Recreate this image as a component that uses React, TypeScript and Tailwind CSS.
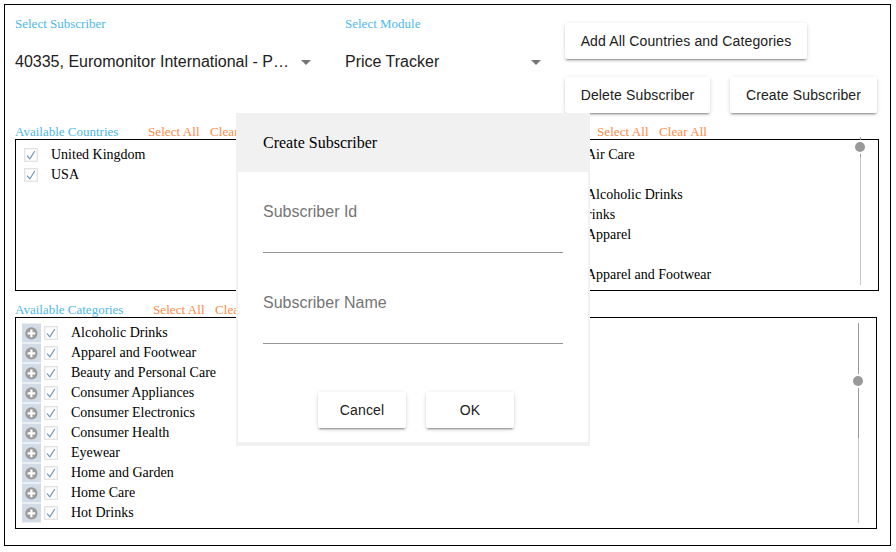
import React from "react";

const serif = "font-['Liberation_Serif','Times_New_Roman',serif]";
const sans = "font-['Liberation_Sans',Arial,sans-serif]";

const categories = [
  "Alcoholic Drinks",
  "Apparel and Footwear",
  "Beauty and Personal Care",
  "Consumer Appliances",
  "Consumer Electronics",
  "Consumer Health",
  "Eyewear",
  "Home and Garden",
  "Home Care",
  "Hot Drinks",
];

function Check() {
  return (
    <span className="flex size-[14px] shrink-0 items-center justify-center border border-[#e3e3e3] bg-white shadow-[inset_0_0_0_1px_#f4f4f4]">
      <svg width="12" height="12" viewBox="0 0 12 12" fill="none" stroke="#6491b9" strokeWidth="1.1">
        <path d="M2 6.6 L4.9 9.8 L9.8 2" />
      </svg>
    </span>
  );
}

function Plus() {
  return (
    <span className="flex h-[20px] w-[19px] shrink-0 items-start border-b border-[#e9eff5] bg-[#d2dce7] pl-[3px] pt-1 shadow-[inset_0_1px_0_#e9eff5]">
      <svg className="shrink-0" width="13" height="13" viewBox="0 0 13 13">
        <circle cx="6.4" cy="6.4" r="6.1" fill="#9b9b9b" />
        <path d="M6.4 2.6V10.2M2.6 6.4H10.2" stroke="#fff" strokeWidth="2.2" />
      </svg>
    </span>
  );
}

function Button({ className = "", children }: { className?: string; children: React.ReactNode }) {
  return (
    <button
      className={`h-9 shrink-0 whitespace-nowrap rounded-[2px] bg-white text-center text-[14px] leading-9 tracking-[0.14px] text-[#212121] shadow-[0_3px_1px_-2px_rgba(0,0,0,0.2),0_2px_2px_0_rgba(0,0,0,0.14),0_1px_5px_0_rgba(0,0,0,0.12)] ${sans} ${className}`}
    >
      {children}
    </button>
  );
}

function Select({ label, value, className }: { label: string; value: string; className: string }) {
  return (
    <div className={className}>
      <div className="text-[13px] leading-4 text-[#4db8ec]">{label}</div>
      <div className={`mt-5 flex items-center justify-between text-[16px] leading-5 text-[#212121] ${sans}`}>
        <span className="whitespace-nowrap">{value}</span>
        <svg className="mr-px" width="10" height="5" viewBox="0 0 10 5">
          <path d="M0 0H10L5 5Z" fill="#757575" />
        </svg>
      </div>
    </div>
  );
}

function Actions() {
  return (
    <div className="flex whitespace-nowrap tracking-[0.08px] text-[#ff8a45]">
      <span className="w-[62px]">Select All</span>
      <span className="w-[49px]">Clear All</span>
    </div>
  );
}

export default function App() {
  return (
    <div className={`h-[552px] w-[896px] overflow-hidden bg-white p-1 text-black ${serif}`}>
      <div className="h-[542px] w-[887px] border border-black pl-[10px]">
        <div className="flex h-[119px]">
          <Select className="w-[297px] pt-[11px]" label="Select Subscriber" value="40335, Euromonitor International - P…" />
          <Select className="ml-[33px] w-[197px] pt-[11px]" label="Select Module" value="Price Tracker" />
          <div className="ml-[23px] pt-[18px]">
            <Button className="w-[242px]">Add All Countries and Categories</Button>
            <div className="mt-[18px] flex gap-5">
              <Button className="w-[145px]">Delete Subscriber</Button>
              <Button className="w-[147px]">Create Subscriber</Button>
            </div>
          </div>
        </div>

        <div className="flex h-[15px] text-[13px] leading-[16px]">
          <span className="w-[133px] text-[#4db8ec]">Available Countries</span>
          <Actions />
          <div className="ml-[338px]">
            <Actions />
          </div>
        </div>
        <div className="flex h-[152px] w-[864px]">
          <div className="w-[420px] border border-black pl-[8px] pt-[5px] text-[14px] leading-5">
            {["United Kingdom", "USA"].map((c) => (
              <div key={c} className="flex h-5 items-center">
                <Check />
                <span className="ml-[13px]">{c}</span>
              </div>
            ))}
          </div>
          <div className="flex flex-1 justify-between border border-l-0 border-black pr-[12px]">
            <div className="pl-[151px] pt-[5px] text-[14px] leading-5">
              <div className="h-10">Air Care</div>
              <div className="h-5">Alcoholic Drinks</div>
              <div className="-ml-[9px] h-5">Drinks</div>
              <div className="h-10">Apparel</div>
              <div className="h-5">Apparel and Footwear</div>
            </div>
            <div className="-mt-[3px] flex w-[11px] flex-col items-start">
              <div className="ml-[5px] h-[3px] w-px bg-[#999]" />
              <div className="my-[2px] size-[10px] rounded-full bg-[#999]" />
              <div className="ml-[5px] h-[3px] w-px bg-[#999]" />
              <div className="ml-[5px] h-[128px] w-px bg-[#c8c8c8]" />
            </div>
          </div>
        </div>

        <div className="mt-[11px] flex h-[15px] text-[13px] leading-[16px]">
          <span className="w-[138px] text-[#4db8ec]">Available Categories</span>
          <Actions />
        </div>
        <div className="flex h-[212px] w-[862px] justify-between border border-black pl-[6px] pr-[12px] pt-[5px]">
          <div className="text-[14px] leading-5">
            {categories.map((c) => (
              <div key={c} className="flex h-5 items-center whitespace-nowrap">
                <Plus />
                <span className="ml-[3px]">
                  <Check />
                </span>
                <span className="ml-[13px]">{c}</span>
              </div>
            ))}
          </div>
          <div className="flex w-[11px] flex-col items-start">
            <div className="ml-[5px] h-[51px] w-px bg-[#999]" />
            <div className="my-[2px] size-[10px] rounded-full bg-[#999]" />
            <div className="ml-[5px] h-[50px] w-px bg-[#999]" />
            <div className="ml-[5px] h-[85px] w-px bg-[#c8c8c8]" />
          </div>
        </div>
      </div>

      <div className="absolute left-[236px] top-[113px] flex h-[333px] w-[354px] flex-col border-x-2 border-b-4 border-[#f1f1f1] bg-white px-[25px]">
        <div className="-mx-[25px] flex h-[59px] items-center bg-[#f1f1f1] pl-[25px] pt-px text-[16px]">Create Subscriber</div>
        <div className={`text-[16px] leading-5 text-[#757575] ${sans}`}>
          <div className="mt-[30px] h-[51px] border-b border-[#949494]">Subscriber Id</div>
          <div className="mt-[40px] h-[51px] border-b border-[#949494]">Subscriber Name</div>
        </div>
        <div className="mt-12 flex gap-5 pl-[55px]">
          <Button className="w-[88px]">Cancel</Button>
          <Button className="w-[88px]">OK</Button>
        </div>
      </div>
    </div>
  );
}
